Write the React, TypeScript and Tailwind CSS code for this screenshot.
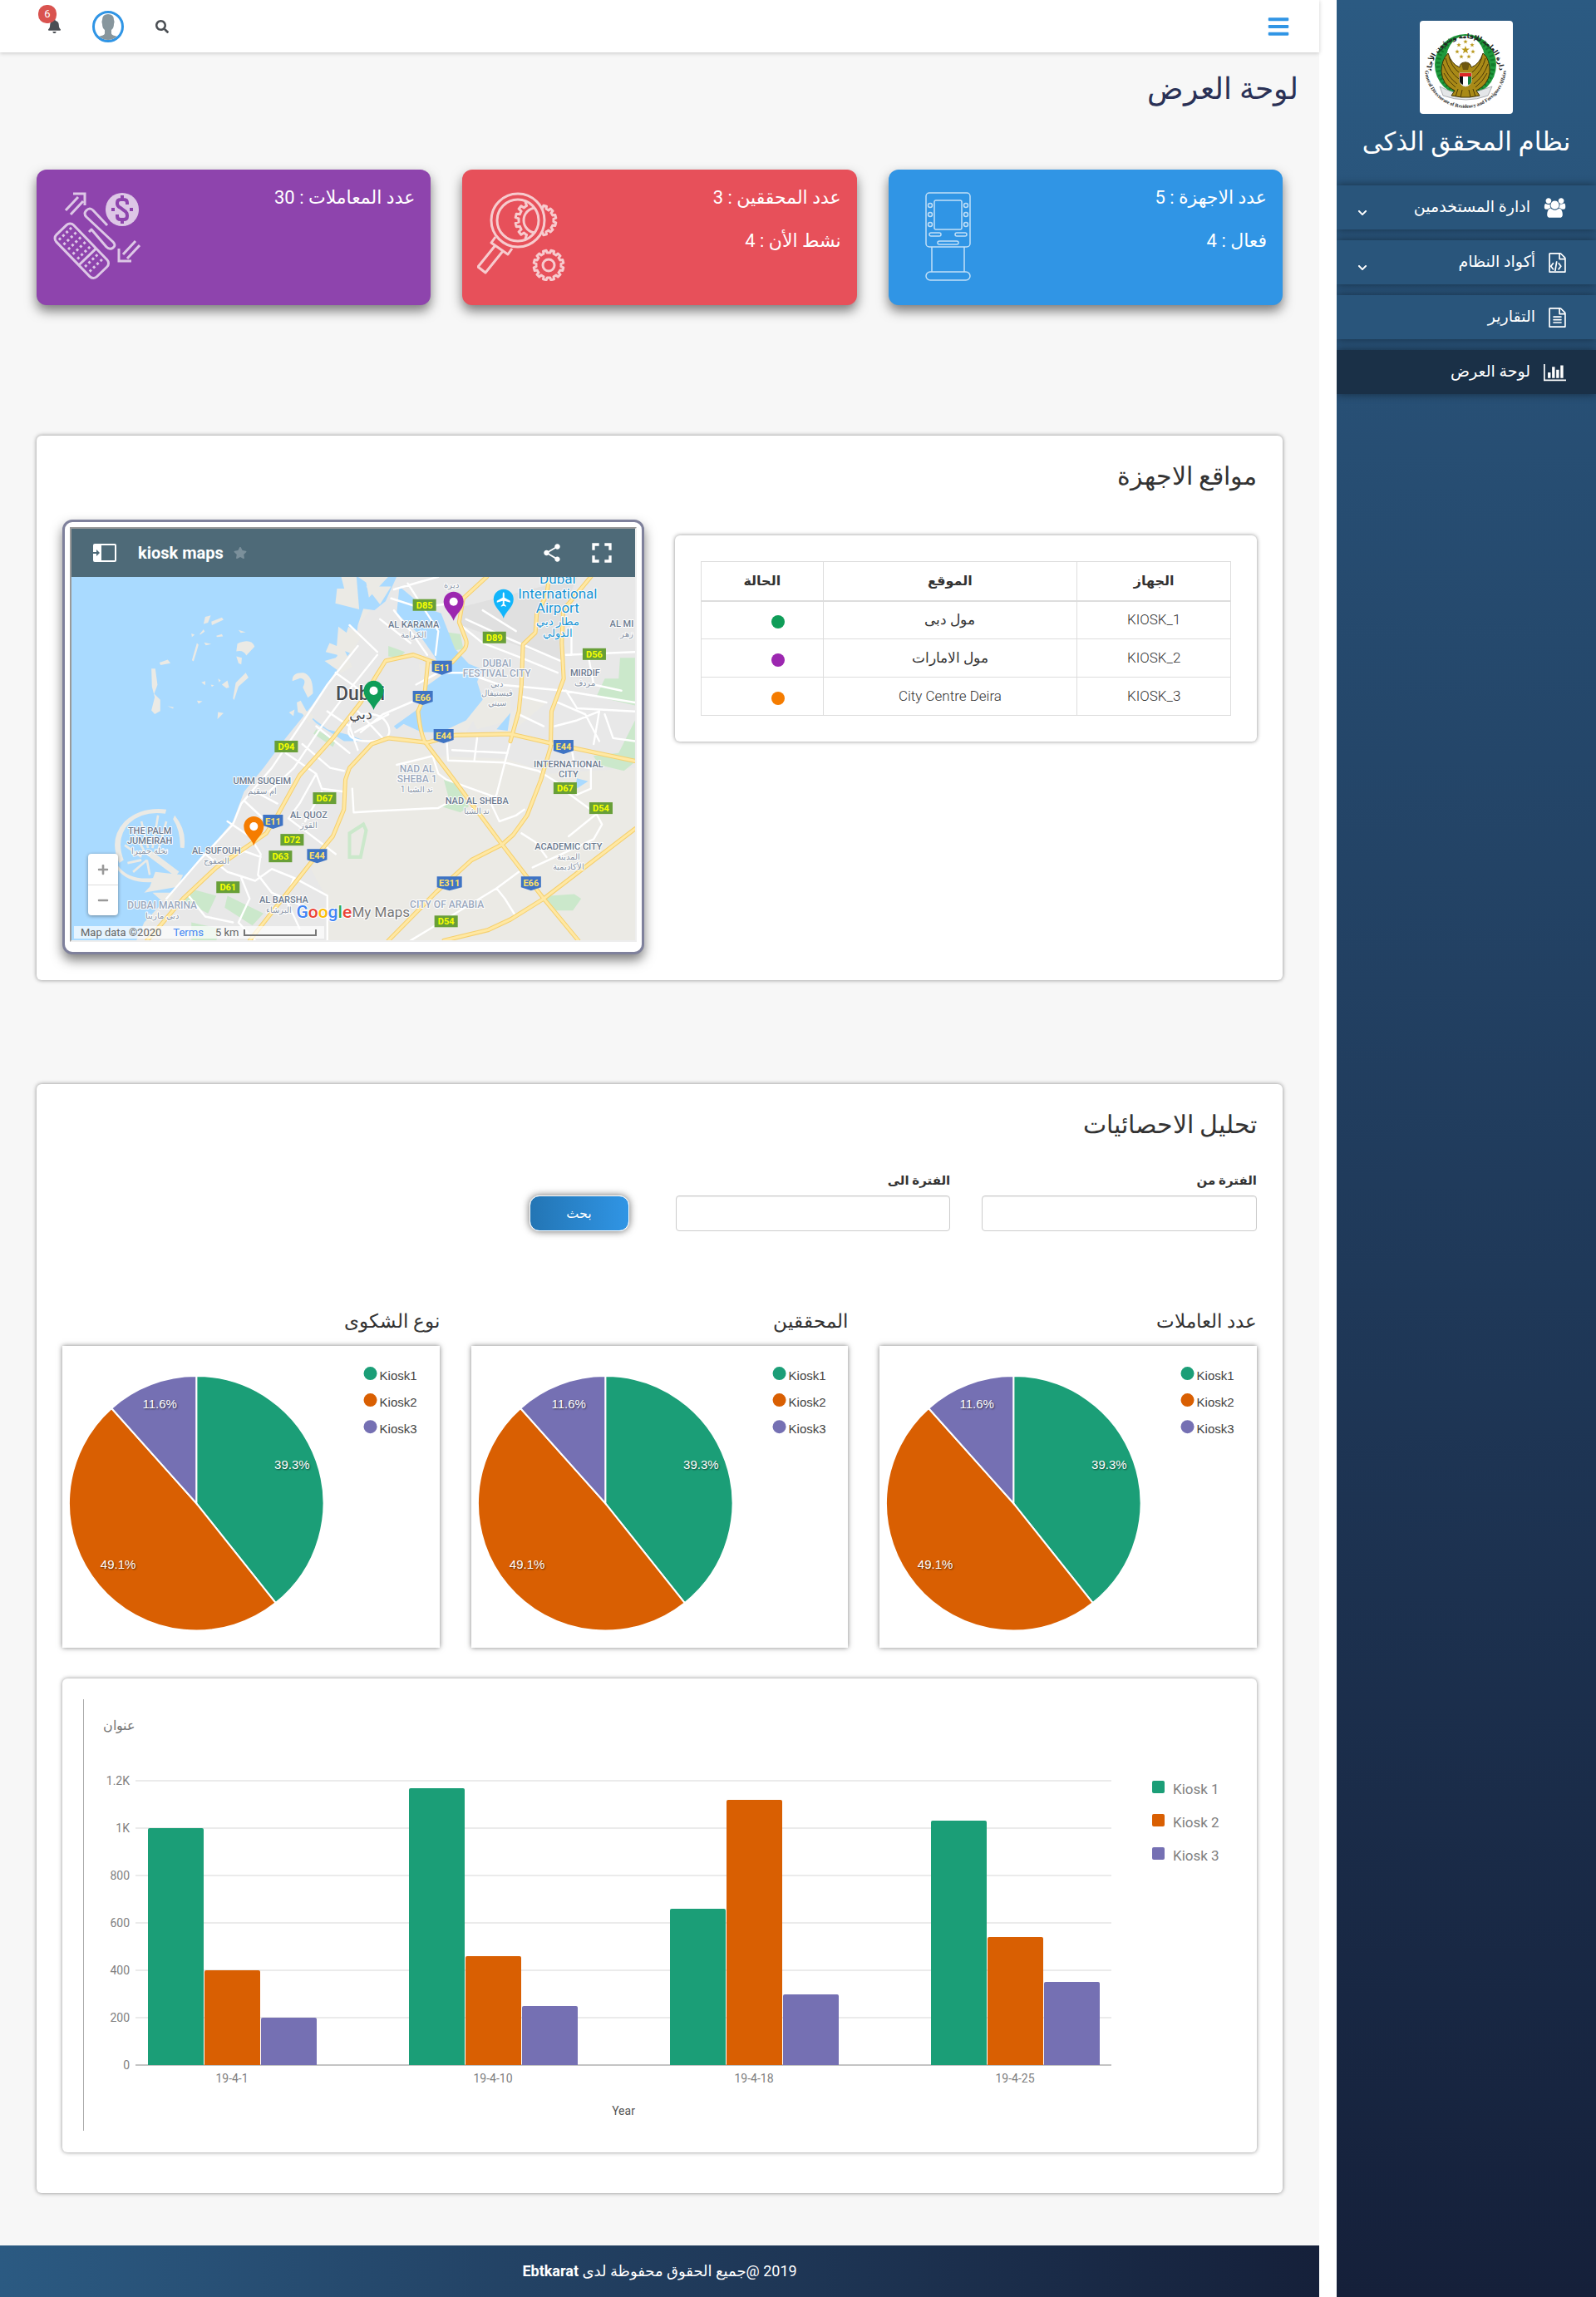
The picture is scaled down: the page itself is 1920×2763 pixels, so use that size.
import type { ReactNode } from "react";
import { FaBars, FaBell, FaSearch, FaChevronDown, FaStar, FaPlus, FaMinus } from "react-icons/fa";
import { MdShare, MdFullscreen } from "react-icons/md";

const FILE_OUTLINE =
  "M1596 380q28 28 48 76t20 88v1152q0 40-28 68t-68 28h-1344q-40 0-68-28t-28-68v-1600q0-40 28-68t68-28h896q40 0 88 20t76 48zm-444-244v376h376q-10-29-22-41l-313-313q-12-12-41-22zm384 1528v-1024h-416q-40 0-68-28t-28-68v-416h-768v1536h1280z";

function UsersIcon() {
  return (
    <svg viewBox="0 0 2048 1792" className="h-6 w-[27px]" fill="currentColor" aria-hidden="true">
      <path d="M657 896q-162 5-265 128h-134q-82 0-138-40.5t-56-118.5q0-353 124-353 6 0 43.5 21t97.5 42.5 119 21.5q67 0 133-23-5 37-5 66 0 159 90 290zm1071 637q0 120-73 189.5t-194 69.5h-874q-121 0-194-69.5t-73-189.5q0-53 3.5-103.5t14-109 26.5-108.5 43-97.5 62-81 85.5-53.5 111.5-20q10 0 43 21.5t73 48 107 48 135 21.5 135-21.5 107-48 73-48 43-21.5q61 0 111.5 20t85.5 53.5 62 81 43 97.5 26.5 108.5 14 109 3.5 103.5zm-1024-1277q0 106-75 181t-181 75-181-75-75-181 75-181 181-75 181 75 75 181zm704 384q0 159-112.5 271.5t-271.5 112.5-271.5-112.5-112.5-271.5 112.5-271.5 271.5-112.5 271.5 112.5 112.5 271.5zm576 225q0 78-56 118.5t-138 40.5h-134q-103-123-265-128 90-131 90-290 0-29-5-66 66 23 133 23 59 0 119-21.5t97.5-42.5 43.5-21q124 0 124 353zm-128-609q0 106-75 181t-181 75-181-75-75-181 75-181 181-75 181 75 75 181z" />
    </svg>
  );
}

function FileCodeIcon() {
  return (
    <svg viewBox="128 0 1536 1792" className="h-6 w-[21px]" fill="currentColor" aria-hidden="true">
      <path d={FILE_OUTLINE} />
      <path transform="translate(0 0)" d="M480 896q8-11 21-12.5t24 6.5l51 38q11 8 12.500 21t-6.500 24l-182 243 182 243q8 11 6.500 24t-12.500 21l-51 38q-11 8-24 6.500t-21-12.500l-226-301q-14-19 0-38zm802 301q14 19 0 38l-226 301q-8 11-21 12.500t-24-6.500l-51-38q-11-8-12.500-21t6.500-24l182-243-182-243q-8-11-6.500-24t12.500-21l51-38q11-8 24-6.500t21 12.500zm-620 461q-13-2-20.500-13t-5.500-24l138-831q2-13 13-20.500t24-5.500l63 10q13 2 20.500 13t5.500 24l-138 831q-2 13-13 20.500t-24 5.500z" />
    </svg>
  );
}

function FileTextIcon() {
  return (
    <svg viewBox="128 0 1536 1792" className="h-6 w-[21px]" fill="currentColor" aria-hidden="true">
      <path d={FILE_OUTLINE} />
      <path d="M512 800q0-14 9-23t23-9h704q14 0 23 9t9 23v64q0 14-9 23t-23 9h-704q-14 0-23-9t-9-23zM1248 1024q14 0 23 9t9 23v64q0 14-9 23t-23 9h-704q-14 0-23-9t-9-23v-64q0-14 9-23t23-9zM1248 1280q14 0 23 9t9 23v64q0 14-9 23t-23 9h-704q-14 0-23-9t-9-23v-64q0-14 9-23t23-9z" />
    </svg>
  );
}

function ChartIcon() {
  return (
    <svg viewBox="0 0 2048 1792" className="h-6 w-[27px]" fill="currentColor" aria-hidden="true">
      <path d="M640 896v512h-256v-512h256zm384-512v1024h-256v-1024h256zm1024 1152v128h-2048v-1536h128v1408h1920zm-640-896v768h-256v-768h256zm384-384v1152h-256v-1152h256z" />
    </svg>
  );
}

const STAR = "M0-4 1-1.2 3.9-1.2 1.6.6 2.4 3.4 0 1.7-2.4 3.4-1.6.6-3.9-1.2-1-1.2Z";

function Emblem() {
  const stars: [number, number, number][] = [
    [55, 35, 1.25],
    [55, 25, 0.7],
    [47, 29, 0.7],
    [63, 29, 0.7],
    [45, 37, 0.7],
    [64, 37, 0.7],
    [50, 43, 0.7],
    [59, 43, 0.7],
  ];
  return (
    <svg viewBox="0 0 112 112" className="h-28 w-28 rounded bg-white" role="img" aria-label="شعار">
      <defs>
        <path id="ringTop" d="M14 62A41 41 0 1 1 96 62" />
        <path id="ringBottom" d="M7 46A49 49 0 1 0 103 46" />
      </defs>
      <circle cx="55" cy="53" r="37" fill="#1f9a3d" />
      <circle cx="55" cy="53" r="33" fill="none" stroke="#127a2b" strokeWidth="5" strokeDasharray="2 3" />
      <ellipse cx="55" cy="46" rx="23" ry="28" fill="#fff" />
      <path d="M24 79Q40 88 55 87T87 79L82 90Q56 100 28 90Z" fill="#e4e6e8" stroke="#9a9da1" strokeWidth=".8" />
      <path
        d="M55 50q6 0 7 6 10-4 14-17 9 7 8 24-2 14-16 21l4 6-12 2h-10l-12-2 4-6Q27 77 26 61q0-14 8-22 4 13 14 17 0-6 7-6Z"
        fill="#a98a17"
        stroke="#3f3207"
        strokeWidth="1"
      />
      <g fill="none" stroke="#4b3b08" strokeWidth="1">
        <path d="M31 45q4 16 16 25M28 52q5 15 17 24M29 63q5 10 14 17M79 45q-4 16-16 25M82 52q-5 15-17 24M81 63q-5 10-14 17M35 43q3 12 12 19M75 43q-3 12-12 19" />
        <path d="M46 82l-3 9M51 83l-2 9M59 83l2 9M64 82l3 9" />
      </g>
      <path d="M50 52q5-5 10 0l-2 7h-6Z" fill="#6d560e" />
      <path d="M48 63h14v11q-3 5-7 5t-7-5Z" fill="#fff" stroke="#d8d8d8" strokeWidth="1" />
      <path d="M48 63h14v4H48Z" fill="#dc2626" />
      <path d="M48 67h4v10q-4-2-4-4Z" fill="#111" />
      <path d="M58 67h4v6q0 3-4 4Z" fill="#15803d" />
      {stars.map(([x, y, s]) => (
        <path key={`${x}-${y}`} d={STAR} transform={`translate(${x} ${y}) scale(${s})`} fill="#b8981c" />
      ))}
      <text className="text-[8px] font-bold" fill="#222" textAnchor="middle">
        <textPath href="#ringTop" startOffset="50%">الإدارة العامة للإقامة وشؤون الأجانب</textPath>
      </text>
      <text className="font-['Liberation_Serif'] text-[6px] font-bold" fill="#222" textAnchor="middle" direction="ltr">
        <textPath href="#ringBottom" startOffset="50%">General Directorate of Residency and Foreigners Affairs</textPath>
      </text>
    </svg>
  );
}

type NavItem = { label: string; icon: ReactNode; expandable?: boolean; active?: boolean };

const navItems: NavItem[] = [
  { label: "ادارة المستخدمين", icon: <UsersIcon />, expandable: true },
  { label: "أكواد النظام", icon: <FileCodeIcon />, expandable: true },
  { label: "التقارير", icon: <FileTextIcon /> },
  { label: "لوحة العرض", icon: <ChartIcon />, active: true },
];

function Sidebar() {
  return (
    <aside className="mr-0 ml-[21px] w-[312px] shrink-0 overflow-hidden bg-gradient-to-b from-[#2b5a82] to-[#15203a] pt-[25px] text-white">
      <div className="flex flex-col items-center">
        <Emblem />
        <div className="mt-2 mb-[26px] text-[31px] leading-[52px] whitespace-nowrap">نظام المحقق الذكى</div>
      </div>
      <nav className="flex flex-col gap-[13px]">
        {navItems.map((item) => (
          <a
            key={item.label}
            href="#"
            className={
              "flex h-[53px] items-center pr-9 pl-[25px] text-[19px] shadow-[0_0_10px_rgba(0,0,0,0.45)] " +
              (item.active ? "bg-[#1a3047]" : "bg-[#29557b]")
            }
          >
            {item.icon}
            <span className="mr-4 flex-1">{item.label}</span>
            {item.expandable && <FaChevronDown className="mt-3 h-3 w-3" />}
          </a>
        ))}
      </nav>
    </aside>
  );
}

function Header() {
  return (
    <header className="flex h-[63px] items-center justify-between bg-white pr-[35px] pl-[45px] shadow-[0_1px_5px_rgba(0,0,0,0.2)]">
      <button type="button" aria-label="القائمة" className="text-[#3095e5]">
        <FaBars className="h-7 w-7" />
      </button>
      <div className="flex items-center">
        <button type="button" aria-label="بحث" className="text-[#4b4f54]">
          <FaSearch className="h-4 w-4" />
        </button>
        <button
          type="button"
          aria-label="الحساب"
          className="mr-[38px] h-[38px] w-[38px] overflow-hidden rounded-full border-[3px] border-[#3095e5]"
        >
          <svg viewBox="0 0 32 32" fill="#87969d" aria-hidden="true">
            <path d="M9 8Q9 1 16 1t7 7q1 2 0 5 0 5-3 7v4q0 2 4 3l7 2v4H1v-4l7-2q4-1 4-3v-4q-3-2-3-7-1-3 0-5Z" />
          </svg>
        </button>
        <button type="button" aria-label="الاشعارات" className="relative mr-[37px] ml-3 text-[#4b4f54]">
          <FaBell className="h-[17px] w-[17px]" />
          <span className="absolute -top-[17px] right-1.5 flex h-[22px] w-[22px] items-center justify-center rounded-[10px] bg-[#d9534f] text-[13px] text-white">
            6
          </span>
        </button>
      </div>
    </header>
  );
}

function KioskIcon() {
  const lights = [16, 27, 39];
  return (
    <svg viewBox="0 0 107 107" className="h-[107px] w-[107px] opacity-70" fill="none" stroke="#fff" strokeWidth="1.5" aria-hidden="true">
      <rect x="27" y="1" width="53" height="65" rx="4" />
      <rect x="37" y="10" width="33" height="35" rx="2" />
      {lights.map((y) => (
        <g key={y}>
          <circle cx="32" cy={y} r="2.500" />
          <circle cx="75" cy={y} r="2.500" />
        </g>
      ))}
      <rect x="31" y="49" width="14" height="4" rx="2" />
      <rect x="62" y="49" width="14" height="4" rx="2" />
      <rect x="41" y="59" width="25" height="4" rx="2" />
      <path d="M34 66v30M73 66v30" />
      <rect x="27" y="96" width="53" height="10" rx="5" />
    </svg>
  );
}

function gearPath(cx: number, cy: number, inner: number, outer: number, teeth: number) {
  const points: string[] = [];
  const step = (Math.PI * 2) / teeth;
  for (let i = 0; i < teeth; i += 1) {
    const offsets: [number, number][] = [
      [-0.5, inner],
      [-0.28, inner],
      [-0.2, outer],
      [0.2, outer],
      [0.28, inner],
    ];
    offsets.forEach(([shift, radius]) => {
      const angle = (i + shift + 0.5) * step;
      points.push(`${(cx + radius * Math.cos(angle)).toFixed(1)} ${(cy + radius * Math.sin(angle)).toFixed(1)}`);
    });
  }
  return `M${points.join("L")}Z`;
}

function InvestigatorIcon() {
  return (
    <svg viewBox="0 0 107 107" className="h-[107px] w-[107px] opacity-70" fill="none" stroke="#fff" strokeWidth="3" strokeLinejoin="round" aria-hidden="true">
      <defs>
        <clipPath id="lens">
          <circle cx="49" cy="34" r="26" />
        </clipPath>
        <clipPath id="outsideLens">
          <path d="M78 0h29v60H78Z" />
        </clipPath>
      </defs>
      <circle cx="49" cy="34" r="32" />
      <circle cx="49" cy="34" r="25" />
      <g clipPath="url(#lens)">
        <path d={gearPath(71, 34, 21, 25, 14)} />
        <circle cx="71" cy="34" r="15" />
      </g>
      <path clipPath="url(#outsideLens)" d={gearPath(77, 34, 15, 18, 12)} />
      <path d="M22 54l-5 7 20 14 5-7M22 64L1 90l9 7 21-26" />
      <path d={gearPath(86, 88, 15, 18, 12)} />
      <circle cx="86" cy="88" r="7" />
    </svg>
  );
}

function TransactionsIcon() {
  const rows = [0, 1, 2, 3];
  const cols = [0, 1, 2, 3, 4, 5, 6];
  return (
    <svg viewBox="0 0 107 107" className="h-[107px] w-[107px] opacity-70" fill="none" stroke="#fff" strokeWidth="3" aria-hidden="true">
      <g transform="translate(21 34) rotate(46)">
        <rect x="2" y="0" width="70" height="29" rx="6" />
        <path d="M47 0v29" />
        {cols.map((c) =>
          rows.map((r) => (
            <rect key={`${c}-${r}`} x={c < 5 ? 7 + c * 8 : 12 + c * 8} y={4 + r * 6} width="3" height="3" fill="#fff" stroke="none" />
          )),
        )}
      </g>
      <path d="M67 40L50 22Q46 18 42 22T42 30L74 60Q78 64 74 67T66 66L48 45L45 48" strokeLinejoin="round" />
      <path d="M26 2h14v14M17 22L32 6M23 27L38 11" />
      <path d="M81 68v15h15M86 75l15-16M91 80l15-16" />
      <circle cx="85" cy="21" r="20" fill="#fff" stroke="none" />
      <g stroke="#8e44ad" strokeWidth="4">
        <path d="M91 15v-2q0-4-4-4h-4q-4 0-4 4v1q0 3 4 5l4 3q4 2 4 6v1q0 4-4 4h-4q-4 0-4-4v-2M85 4v5M85 33v5M72 21h4M94 21h4" />
      </g>
    </svg>
  );
}

function StatCard({ color, lines, icon }: { color: string; lines: string[]; icon: ReactNode }) {
  return (
    <section className={"flex h-[163px] items-start justify-between rounded-xl pr-[19px] pl-[18px] text-white shadow-[0_7px_14px_rgba(0,0,0,0.5)] " + color}>
      <div className="pt-2 text-[22px] leading-[52px]">
        {lines.map((line) => (
          <p key={line}>{line}</p>
        ))}
      </div>
      <div className="pt-[27px]">{icon}</div>
    </section>
  );
}

const kiosks = [
  { id: "KIOSK_1", place: "مول دبى", dot: "bg-[#0f9d58]" },
  { id: "KIOSK_2", place: "مول الامارات", dot: "bg-[#9c27b0]" },
  { id: "KIOSK_3", place: "City Centre Deira", dot: "bg-[#f57c00]" },
];

function KioskTable() {
  return (
    <div className="mt-[19px] self-start rounded-md bg-white p-[31px] shadow-[0_0_5px_rgba(0,0,0,0.45)]">
      <table className="w-full border-collapse text-center text-[17px] font-light text-[#333]">
        <thead>
          <tr className="h-[47px] text-base font-bold">
            <th className="w-[29%] border border-b-2 border-[#ddd]">الجهاز</th>
            <th className="w-[48%] border border-b-2 border-[#ddd]">الموقع</th>
            <th className="w-[23%] border border-b-2 border-[#ddd]">الحالة</th>
          </tr>
        </thead>
        <tbody>
          {kiosks.map((k) => (
            <tr key={k.id} className="h-[46px]">
              <td className="border border-[#ddd]">{k.id}</td>
              <td className="border border-[#ddd]">{k.place}</td>
              <td className="border border-[#ddd] pt-1 pl-[38px]">
                <span className={"mx-auto block h-4 w-4 rounded-full " + k.dot} />
              </td>
            </tr>
          ))}
        </tbody>
      </table>
    </div>
  );
}

type MapLabel = [number, number, string];

const districtLabels: MapLabel[] = [
  [229, 249, "UMM SUQEIM"],
  [285, 290, "AL QUOZ"],
  [94, 309, "THE PALM"],
  [94, 321, "JUMEIRAH"],
  [174, 333, "AL SUFOUH"],
  [255, 392, "AL BARSHA"],
  [411, 61, "AL KARAMA"],
  [617, 119, "MIRDIF"],
  [661, 60, "AL MI"],
  [597, 229, "INTERNATIONAL"],
  [597, 241, "CITY"],
  [487, 273, "NAD AL SHEBA"],
  [597, 328, "ACADEMIC CITY"],
];

const areaLabels: MapLabel[] = [
  [109, 399, "DUBAI MARINA"],
  [511, 108, "DUBAI"],
  [511, 120, "FESTIVAL CITY"],
  [415, 235, "NAD AL"],
  [415, 247, "SHEBA 1"],
  [451, 398, "CITY OF ARABIA"],
];

const arabicLabels: MapLabel[] = [
  [229, 261, "ام سقيم"],
  [285, 302, "القوز"],
  [94, 333, "نخلة جميرا"],
  [174, 345, "الصفوح"],
  [249, 404, "البرشاء"],
  [109, 411, "دبي مارينا"],
  [411, 73, "الكرامة"],
  [456, 13, "ديرة"],
  [511, 132, "دبي"],
  [511, 143, "فيستيفال"],
  [511, 155, "سيتي"],
  [617, 131, "مردف"],
  [667, 72, "زهر"],
  [415, 259, "ند الشبا 1"],
  [487, 285, "ند الشبا"],
  [597, 340, "المدينة"],
  [597, 352, "الأكاديمية"],
];

const greenShields: MapLabel[] = [
  [258, 204, "D94"],
  [304, 266, "D67"],
  [265, 316, "D72"],
  [251, 336, "D63"],
  [188, 373, "D61"],
  [424, 34, "D85"],
  [508, 73, "D89"],
  [628, 93, "D56"],
  [593, 254, "D67"],
  [636, 278, "D54"],
  [450, 414, "D54"],
];

const blueShields: MapLabel[] = [
  [242, 294, "E11"],
  [295, 335, "E44"],
  [445, 109, "E11"],
  [422, 145, "E66"],
  [447, 191, "E44"],
  [591, 204, "E44"],
  [454, 368, "E311"],
  [552, 368, "E66"],
];

const highways = [
  "M1575 237L1490 310 1475 390 1500 450Q1505 465 1495 480L1450 525 1400 530 1310 500 1210 520 1170 580 1120 660 1020 780 900 905 820 1040 780 1100 600 1215 480 1320 380 1430 350 1461",
  "M1363 520L1350 640 1327 690Q1335 760 1350 790L1440 900 1630 1138 1780 1320 1905 1461",
  "M2109 857L1810 798 1660 766 1460 770 1360 795 1220 780 1160 800 1080 880 1065 920 1060 1020 1020 1110 940 1200 720 1461",
  "M1950 237L1850 350 1845 460 1852 580 1808 690 1805 810 1770 920 1720 1040 1670 1105 1630 1138 1520 1190 1390 1300 1220 1461",
  "M1800 237L1790 300 1755 360 1750 425 1705 465 1700 600 1690 690 1660 790",
  "M2109 1085L1920 1220 1780 1320 1660 1390 1580 1425 1420 1461",
];

const minorRoads =
  "M1110 470L1000 600 930 700 800 880 690 1000 660 1070 540 1190 420 1320M1180 500L1060 640 980 740 880 880 790 960 M1080 400L1180 490M1030 560L1150 640M960 740L1080 830M910 800L1010 880 1060 890M850 830L960 900 980 950 1060 960M1000 690L1080 740 1110 820 M700 990L780 1060M640 1060L720 1110 760 1170 750 1240 800 1300 900 1340M740 960L820 1000M560 1170L640 1230 740 1260 800 1220 880 1250 1000 1310 1000 1461M620 1200L700 1160 760 1180M690 1250L720 1320 680 1400 740 1461M880 1250L850 1320 900 1420M500 1310L560 1380 660 1400 M960 900L900 1000 860 1050 960 1120 1030 1170M980 960L920 1060 M1090 950L1095 1030 1180 1025 1400 1015 1450 990 M1240 280L1400 237M1230 310L1330 340 1420 330 M1240 350L1300 420 1360 500M1290 260L1400 420 1390 500M1190 380L1300 460 M1320 600L1400 560 1500 560 1620 600 1850 620 2109 660M1480 400L1560 460 1700 510 1830 560M1500 380L1640 440 1840 520M1560 350L1680 420 M1350 640L1200 700 1120 760 M1120 700Q1200 690 1220 740T1150 790 1080 740Q1090 700 1140 720M1100 760L1220 700M1110 690L1200 780 M1430 780L1435 855 1640 862 1760 890 1830 930M1540 780L1530 855M1660 790L1640 862 1610 970M1450 820L1650 830M1700 640L1790 660M1690 700L1780 740 M1830 660L1930 700 1980 790M1860 620L1900 680 2109 690M1820 740L1900 720 1980 690 1960 800M1880 810L1890 870M1860 870L1950 880 1950 950 1900 970 1850 930M2109 790L2030 780 2000 700 M1860 500L2109 490M1880 400L1880 500M1940 500L1960 600 2060 620 M1690 1460M1610 970L1590 1000 1620 1060 1680 1040 1710 1020 M1250 870L1380 840 1400 900 1430 920 1610 980M1300 1461L1610 1285 1690 1230M1870 1110L1970 1035 1990 1070 1960 1120 1740 1215M1610 1285L1640 1320 1680 1380M1970 1035L1860 960M1700 1100L1750 1130 1790 1180";

const islets =
  "M560 372l20-5-10 25-16 4zM582 388l38-14 6 8-42 18zM510 428l12 4-10 8zM540 430l14-16 4 8-16 10zM600 436l20-6 4 8-22 2zM680 416l26 8-18 2zM530 460l6 6-8 26-10 30-6-4zM556 458l26 6-20 4zM676 462q50-20 62 10l-30 30q-10-20-36-14zM672 505l20 5-2 22-10-4zM552 510l10 6M366 546h14l8 55-12 30 22 20v38l-20 10-12-12 12-44-10-36zM395 526l30-10 10 12-36 6zM424 672l22 4-2 5zM546 592l14-4v14zM580 600l12 2-8 6zM606 580l10 6-6 6zM620 600l20-14 6 24-10 2zM530 654l20 2-14 8zM606 692l20 4-22 20zM706 560l10 16-36 30-16 46-4-6 10-52zM874 588q-2-30 40-28 36 10 34 70l-18 14-18-34q16-30-10-32zM890 660l14-6 20 34 30 20-20 20-24-30-16-5zM862 694l20-10-4 22z";

function Pin({ x, y, color, children }: { x: number; y: number; color: string; children?: ReactNode }) {
  return (
    <g transform={`translate(${x} ${y})`}>
      <path d="M0 0C-2-8-12-13-12-23a12 12 0 0 1 24 0C12-13 2-8 0 0Z" fill={color} />
      {children ?? <circle cx="0" cy="-23" r="5" fill="#fff" />}
    </g>
  );
}

function KioskMap() {
  return (
    <div className="rounded-xl border-[3px] border-[#7f819c] bg-white px-1.5 pt-1.5 pb-3 shadow-[0_7px_14px_rgba(0,0,0,0.5)]" dir="ltr">
      <div className="border-2 border-t-[#9a9a9a] border-r-[#eee] border-b-[#eee] border-l-[#9a9a9a] font-['Roboto']">
        <div className="flex h-[58px] items-center bg-[#4e6a78] pr-5 pl-[26px] text-white">
          <svg viewBox="0 0 28 22" className="h-[22px] w-7" aria-hidden="true">
            <rect x="1" y="1" width="26" height="20" rx="1" fill="none" stroke="#fff" strokeWidth="2" />
            <path d="M1 1h9v20H1Z" fill="#fff" />
            <path d="M0 11h5" stroke="#4e6a78" strokeWidth="2" />
            <path d="M4 7l4 4-4 4Z" fill="#4e6a78" />
          </svg>
          <span className="ml-[26px] text-xl font-bold">kiosk maps</span>
          <FaStar className="ml-3 h-4 w-4 text-[#7b909b]" />
          <button type="button" aria-label="Share" className="ml-auto">
            <MdShare className="h-[26px] w-[26px]" />
          </button>
          <button type="button" aria-label="Full screen" className="ml-[27px]">
            <MdFullscreen className="h-10 w-10" />
          </button>
        </div>
        <div className="relative h-[437px] overflow-hidden">
          <svg viewBox="0 0 677 437" preserveAspectRatio="xMidYMid slice" className="h-full w-full">
            <g transform="scale(0.3333 0.3571) translate(-78 -237)">
              <path d="M78 237H2115V1465H78Z" fill="#ebeae5" />
              <path d="M1250 237H2115V640L2115 880 1800 900 1650 850 1400 840 1330 780 1160 800 1060 900 1060 1040 940 1220 1000 1320 1000 1465H310L700 960 1110 400Z" fill="#e8e8e8" />
              <path d="M1330 530L1500 560 1540 700 1500 760 1350 720ZM1600 760L1720 640 1790 660 1640 780ZM1480 640l180-20v100l-120 30z" fill="#ebeae5" />
              <path d="M1480 340L1900 240 1860 330 1850 520 1720 480 1480 400Z" fill="#e0e0e0" />
              <path d="M2055 510h54v160L1970 640 2000 580 2050 580ZM2050 830l59-110v140l-40 30-90-20-20-30ZM1800 1310l90-5 25 15-30 40-80 0-25-30ZM640 1310l130 60-40 40-100-60ZM520 1290l80 20-30 60-100-50ZM510 1400l100 20-10 41-90 0ZM960 750l70 40-10 20-70-45ZM1400 420l80 10 10 50-60 10ZM1420 920l40 10 50 80-30 20-70-20 30-20ZM1220 470l60 20-20 20-40-5Z" fill="#cbe8cb" />
              <path d="M1080 1100l50-30 10 20-20 90-40 0Z" fill="none" stroke="#cbe8cb" strokeWidth="12" />
              <path d="M78 237H1250L1210 320 1170 350 1130 345 1110 400 1100 470 1020 570 945 670 850 780 770 880 700 960 660 1060 560 1170 430 1310 340 1400 310 1465H78Z" fill="#a9daff" />
              <path d="M1050 237h55l10 110-86-20 6-50 26 0ZM1110 237h110l-70 70-10-50ZM1040 405l36 25-20 35 20-60 50 30-40 60-30-10-20 45 0-30-42-10 14-30 26 10ZM990 520l40-10 30-30 30 60-40 20ZM1140 270l90 0-40 60Z" fill="#ebeae5" />
              <path d="M1260 270l90 70 60 20 50 120 50 50 50 20-20 40 20 60-60 70-90 40-70 0-70-30 60-50 20-70 60-40-20-60-60-80-80-70ZM1240 740l90-60-10 20-70 50ZM1660 695l-10 60-40-5ZM1900 915l40 10-50 30ZM930 700l70 50 80 20 60 20-80 0-100-60Z" fill="#a9daff" />
              <path d={islets} fill="#ebeae5" />
              <g fill="#ebeae5">
                <path d="M250 1200q-40-80 20-140 60-50 150-40l-4 14q-80-10-130 32-50 50-20 124ZM450 1040q44 50 34 110l-14-2q0-60-26-96ZM246 1210q40 50 130 40l-4 14q-90 6-130-44Z" />
                <path d="M360 1160l100 70-8 10-100-70ZM330 1060l24 90M300 1090l40 70M390 1040l-20 110M270 1140l60 40M420 1060l-30 100M280 1200l50-10M300 1230l50-40M360 1240l-10-50" stroke="#ebeae5" strokeWidth="8" />
                <path d="M380 1230l100 10-20 40-60 10-60 10 20-20ZM370 1300l80 0-20 50Z" />
              </g>
              <g fill="none" strokeLinejoin="round" strokeLinecap="round">
                <path d={minorRoads} stroke="#fff" strokeWidth="7" />
                {highways.map((d) => (
                  <path key={d} d={d} stroke="#f5d06f" strokeWidth="15" />
                ))}
                {highways.map((d) => (
                  <path key={d} d={d} stroke="#ffe8a3" strokeWidth="9" />
                ))}
              </g>
            </g>
            <g textAnchor="middle" stroke="#fff" strokeWidth="2" paintOrder="stroke" strokeLinejoin="round">
              {districtLabels.map(([x, y, t]) => (
                <text key={`${x}-${y}`} x={x} y={y} className="text-[11px] font-medium" fill="#6b7a8f">{t}</text>
              ))}
              {areaLabels.map(([x, y, t]) => (
                <text key={`${x}-${y}`} x={x} y={y} className="text-xs font-medium" fill="#9aa8bd">{t}</text>
              ))}
              {arabicLabels.map(([x, y, t]) => (
                <text key={`${x}-${y}`} x={x} y={y} className="text-[10px]" fill="#8793a5">{t}</text>
              ))}
              <text x="347" y="148" className="text-[23px] font-medium" fill="#4a4d52">Dubai</text>
              <text x="347" y="171" className="text-lg" fill="#4a4d52">دبي</text>
              <g className="text-base" fill="#1a95d4">
                <text x="584" y="8" className="text-[17px]">Dubai</text>
                <text x="584" y="26" className="text-[17px]">International</text>
                <text x="584" y="43" className="text-[17px]">Airport</text>
                <text x="584" y="58" className="text-[13px]">مطار دبي</text>
                <text x="584" y="72" className="text-[13px]">الدولي</text>
              </g>
            </g>
            <g textAnchor="middle" className="text-[11px] font-bold">
              {greenShields.map(([x, y, t]) => (
                <g key={`${x}-${y}`}>
                  <rect x={x - 14} y={y - 7} width="28" height="14" fill="#689f38" />
                  <text x={x} y={y + 4} fill="#f6ff00">{t}</text>
                </g>
              ))}
              {blueShields.map(([x, y, t]) => (
                <g key={`${x}-${y}`}>
                  <path d={`M${x - (t.length > 3 ? 15 : 12)} ${y - 8}h${t.length > 3 ? 30 : 24}v13l-${t.length > 3 ? 15 : 12} 4-${t.length > 3 ? 15 : 12}-4Z`} fill="#3f74c4" />
                  <text x={x} y={y + 4} fill="#ffe168">{t}</text>
                </g>
              ))}
            </g>
            <Pin x={363} y={160} color="#0f9d58" />
            <Pin x={459} y={53} color="#9c27b0" />
            <Pin x={219} y={323} color="#f57c00" />
            <Pin x={519} y={50} color="#12b5fb">
              <path d="M-1-30q1-3 2 0v5l7 4v2l-7-2v4l2 2v1l-3-1-3 1v-1l2-2v-4l-7 2v-2l7-4Z" fill="#fff" />
            </Pin>
            <text x="270" y="410" className="text-[21px] font-medium" stroke="#fff" strokeWidth="2" paintOrder="stroke">
              <tspan fill="#4285f4">G</tspan>
              <tspan fill="#ea4335">o</tspan>
              <tspan fill="#fbbc05">o</tspan>
              <tspan fill="#4285f4">g</tspan>
              <tspan fill="#34a853">l</tspan>
              <tspan fill="#ea4335">e</tspan>
            </text>
            <text x="337" y="409" className="text-[17px]" fill="#777" stroke="#fff" strokeWidth="2" paintOrder="stroke">My Maps</text>
          </svg>
          <div className="absolute bottom-[30px] left-5 w-9 rounded-sm bg-white text-[#999] shadow-[0_1px_4px_rgba(0,0,0,0.4)]">
            <button type="button" aria-label="Zoom in" className="flex h-[38px] w-full items-center justify-center border-b border-[#ddd]">
              <FaPlus className="h-3.5 w-3.5" />
            </button>
            <button type="button" aria-label="Zoom out" className="flex h-9 w-full items-center justify-center">
              <FaMinus className="h-3.5 w-3.5" />
            </button>
          </div>
          <div className="absolute bottom-0.5 left-[3px] flex h-[15px] items-center bg-white/70 pr-[9px] pl-2 text-[13px] leading-none text-[#666]">
            <span>Map data ©2020</span>
            <a href="#" className="ml-3.5 text-[#4285f4]">Terms</a>
            <span className="ml-3.5">5 km</span>
            <span className="ml-1.5 h-2 w-[88px] border-2 border-t-0 border-[#777]" />
          </div>
        </div>
      </div>
    </div>
  );
}

const pieSlices = [
  { name: "Kiosk1", share: 0.393, label: "39.3%", color: "#1b9e77", x: 276, y: 148 },
  { name: "Kiosk2", share: 0.491, label: "49.1%", color: "#d95f02", x: 67, y: 268 },
  { name: "Kiosk3", share: 0.116, label: "11.6%", color: "#7570b3", x: 117, y: 75 },
];

function slicePath(start: number, share: number) {
  const cx = 161;
  const cy = 189;
  const r = 153;
  const at = (turn: number) =>
    `${(cx + r * Math.sin(turn * 2 * Math.PI)).toFixed(2)} ${(cy - r * Math.cos(turn * 2 * Math.PI)).toFixed(2)}`;
  return `M${cx} ${cy}L${at(start)}A${r} ${r} 0 ${share > 0.5 ? 1 : 0} 1 ${at(start + share)}Z`;
}

function PieCard({ title }: { title: string }) {
  let start = 0;
  return (
    <section>
      <h3 className="text-[23px] leading-8 font-light text-[#333]">{title}</h3>
      <div className="mt-[13px] bg-white shadow-[0_0_6px_rgba(0,0,0,0.5)]">
        <svg viewBox="0 0 453 362" className="h-auto w-full font-['Liberation_Sans']" direction="ltr" role="img" aria-label={title}>
          {pieSlices.map((s) => {
            const d = slicePath(start, s.share);
            start += s.share;
            return <path key={s.name} d={d} fill={s.color} stroke="#fff" strokeWidth="2" />;
          })}
          {pieSlices.map((s) => (
            <text
              key={s.name}
              x={s.x}
              y={s.y}
              textAnchor="middle"
              className="text-[15px] [text-shadow:1px_1px_2px_rgba(0,0,0,0.6)]"
              fill="#fff"
            >
              {s.label}
            </text>
          ))}
          {pieSlices.map((s, i) => (
            <g key={s.name}>
              <circle cx="370" cy={33 + i * 32} r="8" fill={s.color} />
              <text x="381" y={41 + i * 32} className="text-[15px]" fill="#444">{s.name}</text>
            </g>
          ))}
        </svg>
      </div>
    </section>
  );
}

const barGroups = [
  { date: "19-4-1", values: [1000, 400, 200] },
  { date: "19-4-10", values: [1170, 460, 250] },
  { date: "19-4-18", values: [660, 1120, 300] },
  { date: "19-4-25", values: [1030, 540, 350] },
];
const barColors = ["#1b9e77", "#d95f02", "#7570b3"];
const barTicks = ["0", "200", "400", "600", "800", "1K", "1.2K"];

function BarChart() {
  return (
    <div className="mt-[37px] rounded-md bg-white px-[25px] pt-[25px] pb-[26px] shadow-[0_0_5px_rgba(0,0,0,0.45)]">
      <svg viewBox="0 0 1387 519" className="h-auto w-full font-['Roboto']" direction="ltr" role="img" aria-label="عنوان">
        <path d="M0 0v519" stroke="#aaa" strokeWidth="2" />
        <text x="24" y="37" className="font-serif text-base" fill="#757575">عنوان</text>
        {barTicks.map((t, i) => (
          <g key={t}>
            <path d={`M63 ${440 - i * 57}H1237`} stroke={i === 0 ? "#c4c4c4" : "#ebebeb"} strokeWidth="2" />
            <text x="56" y={445 - i * 57} textAnchor="end" className="text-sm" fill="#808080">{t}</text>
          </g>
        ))}
        {barGroups.map((g, i) => (
          <g key={g.date}>
            {g.values.map((v, j) => {
              const h = Math.round(v * 0.285);
              const x = 78 + i * 314 + j * 68;
              const y = 440 - h;
              return <path key={barColors[j]} d={`M${x} 440V${y + 2}q0-2 2-2h63q2 0 2 2V440Z`} fill={barColors[j]} />;
            })}
            <text x={179 + i * 314} y="461" textAnchor="middle" className="text-sm" fill="#808080">{g.date}</text>
          </g>
        ))}
        <text x="650" y="500" textAnchor="middle" className="text-sm" fill="#555">Year</text>
        {barColors.map((c, i) => (
          <g key={c}>
            <rect x="1286" y={98 + i * 40} width="15" height="15" rx="2" fill={c} />
            <text x="1311" y={114 + i * 40} className="text-[17px]" fill="#808080">{`Kiosk ${i + 1}`}</text>
          </g>
        ))}
      </svg>
    </div>
  );
}

const panelClass = "mx-[44px] rounded-md bg-white px-[31px] pt-6 shadow-[0_0_5px_rgba(0,0,0,0.45)]";
const inputClass =
  "mt-1 h-[43px] w-full rounded border border-[#ccc] bg-white px-3 text-base shadow-[inset_0_1px_1px_rgba(0,0,0,0.075)] outline-none";

export default function App() {
  return (
    <div dir="rtl" className="flex min-h-screen bg-white font-['Roboto','DejaVu_Sans',sans-serif] text-[#333]">
      <Sidebar />
      <main className="flex min-w-0 flex-1 flex-col bg-[#f7f7f7]">
        <Header />
        <h1 className="mt-[18px] mr-[25px] text-4xl leading-[52px] font-light text-[#2a3156]">لوحة العرض</h1>
        <div className="mx-[44px] mt-[71px] grid grid-cols-3 gap-[38px]">
          <StatCard color="bg-[#3095e5]" lines={["عدد الاجهزة : 5", "فعال : 4"]} icon={<KioskIcon />} />
          <StatCard color="bg-[#e7505a]" lines={["عدد المحققين : 3", "نشط الأن : 4"]} icon={<InvestigatorIcon />} />
          <StatCard color="bg-[#8e44ad]" lines={["عدد المعاملات : 30"]} icon={<TransactionsIcon />} />
        </div>

        <section className={"mt-[157px] pb-[31px] " + panelClass}>
          <h2 className="text-3xl leading-[50px] font-light">مواقع الاجهزة</h2>
          <div className="mt-[27px] grid grid-cols-2 gap-[37px]">
            <KioskTable />
            <KioskMap />
          </div>
        </section>

        <section className={"mt-[125px] pb-[49px] " + panelClass}>
          <h2 className="text-3xl leading-[50px] font-light">تحليل الاحصائيات</h2>
          <form className="mt-7 grid grid-cols-4 gap-[38px]">
            <div>
              <label htmlFor="from" className="block text-[15px] leading-7 font-bold">الفترة من</label>
              <input id="from" type="text" className={inputClass} />
            </div>
            <div>
              <label htmlFor="to" className="block text-[15px] leading-7 font-bold">الفترة الى</label>
              <input id="to" type="text" className={inputClass} />
            </div>
            <div className="pt-8 pr-[18px]">
              <button
                type="button"
                className="h-[43px] w-[120px] rounded-xl border border-white bg-gradient-to-r from-[#2375b4] to-[#3095e5] text-base text-white shadow-[0_0_10px_rgba(0,0,0,0.6)]"
              >
                بحث
              </button>
            </div>
          </form>
          <div className="mt-[93px] grid grid-cols-3 gap-[38px]">
            <PieCard title="عدد العاملات" />
            <PieCard title="المحققين" />
            <PieCard title="نوع الشكوى" />
          </div>
          <BarChart />
        </section>

        <footer className="mt-[63px] flex min-h-[61px] flex-1 items-center justify-center bg-gradient-to-r from-[#2b5a82] to-[#15203a] text-lg text-white">
          <p>
            2019 @جميع الحقوق محفوظة لدى <strong>Ebtkarat</strong>
          </p>
        </footer>
      </main>
    </div>
  );
}
